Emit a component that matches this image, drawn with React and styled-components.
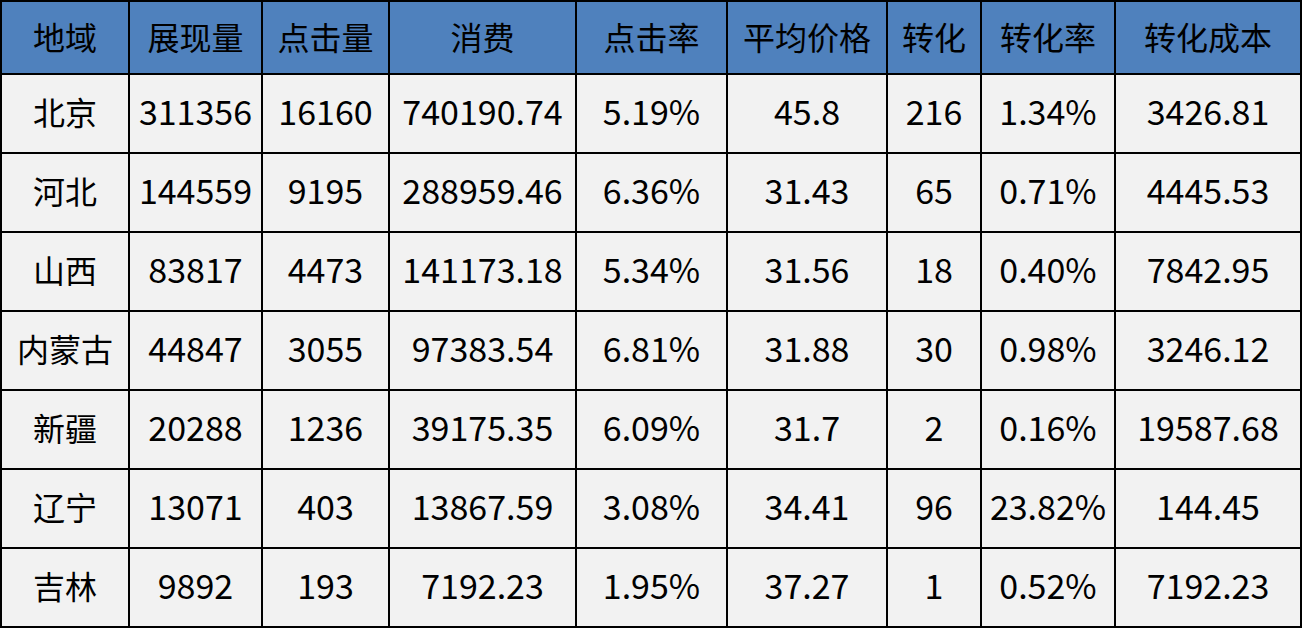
import React from "react";
import styled, { createGlobalStyle } from "styled-components";

const GlobalStyle = createGlobalStyle`
  html, body {
    margin: 0;
    padding: 0;
    background: #ffffff;
  }
  body {
    font-family: "Noto Sans CJK SC", "Noto Sans", sans-serif;
  }
`;

const columns = [
  { key: "region", title: "地域", width: 128 },
  { key: "impressions", title: "展现量", width: 133 },
  { key: "clicks", title: "点击量", width: 127 },
  { key: "cost", title: "消费", width: 187 },
  { key: "ctr", title: "点击率", width: 151 },
  { key: "avgPrice", title: "平均价格", width: 160 },
  { key: "conversions", title: "转化", width: 94 },
  { key: "cvr", title: "转化率", width: 134 },
  { key: "cpa", title: "转化成本", width: 186 }
];

const rows = [
  ["北京", "311356", "16160", "740190.74", "5.19%", "45.8", "216", "1.34%", "3426.81"],
  ["河北", "144559", "9195", "288959.46", "6.36%", "31.43", "65", "0.71%", "4445.53"],
  ["山西", "83817", "4473", "141173.18", "5.34%", "31.56", "18", "0.40%", "7842.95"],
  ["内蒙古", "44847", "3055", "97383.54", "6.81%", "31.88", "30", "0.98%", "3246.12"],
  ["新疆", "20288", "1236", "39175.35", "6.09%", "31.7", "2", "0.16%", "19587.68"],
  ["辽宁", "13071", "403", "13867.59", "3.08%", "34.41", "96", "23.82%", "144.45"],
  ["吉林", "9892", "193", "7192.23", "1.95%", "37.27", "1", "0.52%", "7192.23"]
];

const Table = styled.table`
  border-collapse: separate;
  border-spacing: 0;
  table-layout: fixed;
  width: 1302px;
  border-top: 2px solid #000;
  border-left: 2px solid #000;
  color: #000;
`;

const HeadCell = styled.th`
  box-sizing: border-box;
  height: 73px;
  padding: 0 0 4px;
  background: #4f81bd;
  border-right: 2px solid #000;
  border-bottom: 2px solid #000;
  font-size: 32px;
  font-weight: 400;
  text-align: center;
  white-space: nowrap;
`;

const Cell = styled.td`
  box-sizing: border-box;
  height: 79px;
  padding: 0 0 6px;
  background: #f2f2f2;
  border-right: 2px solid #000;
  border-bottom: 2px solid #000;
  font-size: ${(p) => (p.$numeric ? "34px" : "32px")};
  text-align: center;
  white-space: nowrap;
`;

export default function App() {
  return (
    <>
      <GlobalStyle />
      <Table>
        <colgroup>
          {columns.map((c) => (
            <col key={c.key} style={{ width: c.width }} />
          ))}
        </colgroup>
        <thead>
          <tr>
            {columns.map((c) => (
              <HeadCell key={c.key}>{c.title}</HeadCell>
            ))}
          </tr>
        </thead>
        <tbody>
          {rows.map((r) => (
            <tr key={r[0]}>
              {r.map((v, i) => (
                <Cell key={i} $numeric={i > 0}>
                  {v}
                </Cell>
              ))}
            </tr>
          ))}
        </tbody>
      </Table>
    </>
  );
}
